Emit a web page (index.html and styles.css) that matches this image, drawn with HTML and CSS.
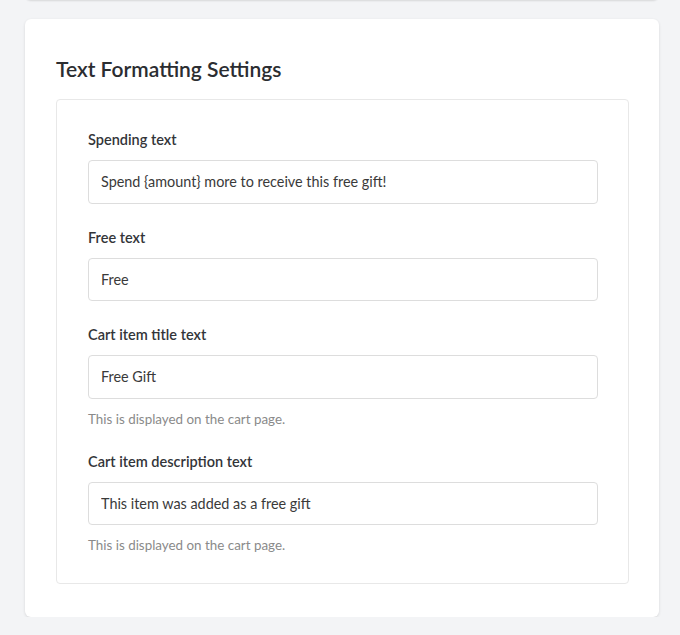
FILE: index.html
```html
<!DOCTYPE html>
<html lang="en">
<head>
<meta charset="utf-8">
<title>Text Formatting Settings</title>
<link rel="stylesheet" href="styles.css">
</head>
<body>
<div class="page">
  <div class="prev-card"></div>
  <section class="card">
    <h2 class="card-title">Text Formatting Settings</h2>
    <div class="panel">
      <div class="field">
        <label class="field-label" for="spending">Spending text</label>
        <input class="field-input" id="spending" type="text" value="Spend {amount} more to receive this free gift!">
      </div>
      <div class="field">
        <label class="field-label" for="free">Free text</label>
        <input class="field-input" id="free" type="text" value="Free">
      </div>
      <div class="field">
        <label class="field-label" for="title">Cart item title text</label>
        <input class="field-input" id="title" type="text" value="Free Gift">
        <p class="field-help">This is displayed on the cart page.</p>
      </div>
      <div class="field">
        <label class="field-label" for="desc">Cart item description text</label>
        <input class="field-input" id="desc" type="text" value="This item was added as a free gift">
        <p class="field-help">This is displayed on the cart page.</p>
      </div>
    </div>
  </section>
</div>
</body>
</html>
```
FILE: styles.css
```css
* { box-sizing: border-box; }
html, body { margin: 0; padding: 0; }
body {
  background: #f3f4f6;
  font-family: "Lato", "Open Sans", "Liberation Sans", sans-serif;
  color: #333333;
}
.page {
  padding: 0 21px 0 25px;
}
.prev-card {
  height: 40px;
  margin-top: -40px;
  background: #ffffff;
  border-radius: 0 0 6px 6px;
  box-shadow: 0 1px 2px rgba(0, 0, 0, 0.12);
}
.card {
  margin-top: 19px;
  background: #ffffff;
  border-radius: 6px;
  box-shadow: 0 1px 3px rgba(0, 0, 0, 0.12);
  padding: 36px 30px 33px 31px;
}
.card-title {
  margin: 0 0 16px;
  font-size: 21px;
  line-height: 28px;
  font-weight: 600;
  color: #2b2d31;
}
.panel {
  border: 1px solid #e8e8e8;
  border-radius: 4px;
  padding: 30px 30px 29px 31px;
}
.field {
  display: flex;
  flex-direction: column;
}
.field + .field {
  margin-top: 24px;
}
.field-label {
  font-size: 14.5px;
  line-height: 20px;
  font-weight: 600;
  color: #333539;
  margin-bottom: 10px;
}
.field-input {
  height: 43.5px;
  border: 1px solid #dddddd;
  border-radius: 4px;
  padding: 0 12px;
  font-family: inherit;
  font-size: 14.4px;
  color: #3a3a3a;
  background: #ffffff;
  outline: none;
}
.field-help {
  margin: 12px 0 0;
  font-size: 13.4px;
  line-height: 17px;
  color: #8a8a8a;
}
```
